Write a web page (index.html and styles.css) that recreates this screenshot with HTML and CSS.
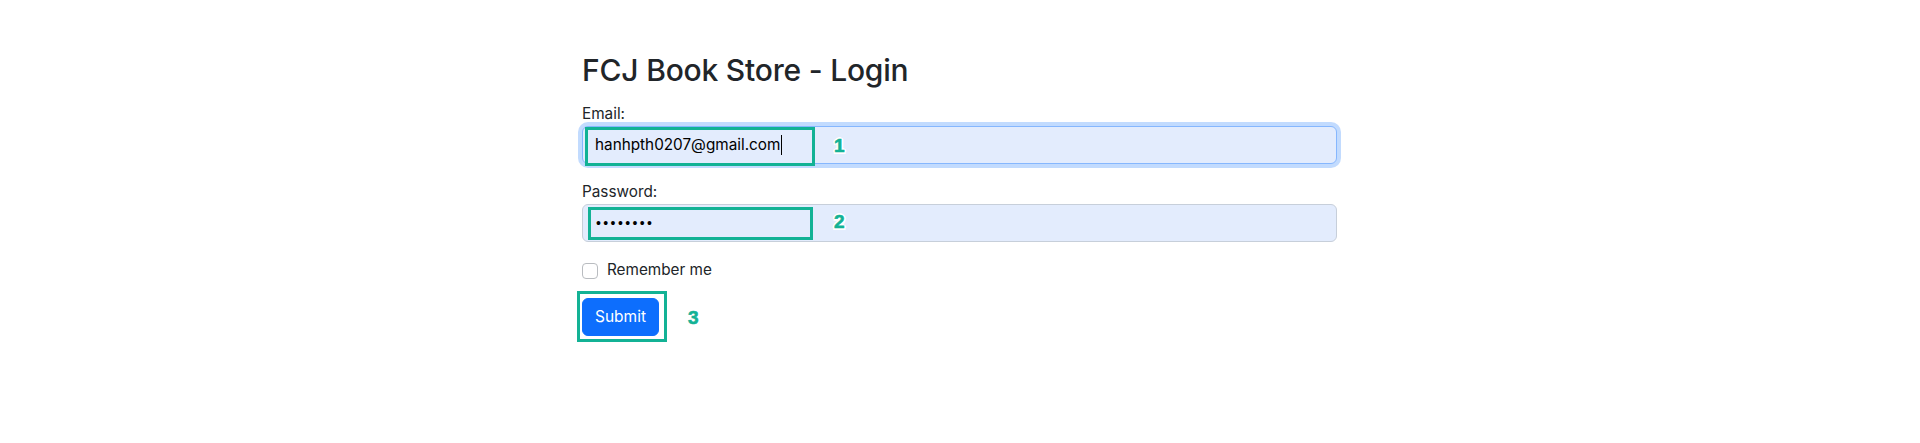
FILE: index.html
```html
<!DOCTYPE html>
<html lang="en">
<head>
<meta charset="utf-8">
<title>FCJ Book Store - Login</title>
<link rel="stylesheet" href="styles.css">
</head>
<body>
<main class="page">
  <h2 class="title">FCJ Book Store - Login</h2>
  <form class="form">
    <div class="group">
      <label class="label">Email:</label>
      <div class="field field-focus">
        <span class="value">hanhpth0207@gmail.com</span><span class="caret"></span>
        <span class="mark mark-1"></span>
        <span class="num num-1">1</span>
      </div>
    </div>
    <div class="group">
      <label class="label">Password:</label>
      <div class="field">
        <span class="value dots">••••••••</span>
        <span class="mark mark-2"></span>
        <span class="num num-2">2</span>
      </div>
    </div>
    <div class="group check">
      <span class="checkbox"></span>
      <span class="check-label">Remember me</span>
    </div>
    <div class="btn-wrap">
      <button type="button" class="btn">Submit</button>
      <span class="mark mark-3"></span>
      <span class="num num-3">3</span>
    </div>
  </form>
</main>
</body>
</html>
```
FILE: styles.css
```css
* { box-sizing: border-box; }
html, body { margin: 0; padding: 0; background: #fff; }
body {
  font-family: Inter, "Liberation Sans", Arial, sans-serif;
  font-size: 15.3px;
  line-height: 1.5;
  color: #212529;
  min-height: 443px;
}
.page {
  width: 755px;
  margin-left: 582px;
  padding-top: 51px;
  padding-bottom: 80px;
}
.title {
  margin: 0 0 13px;
  font-size: 30px;
  font-weight: 500;
  line-height: 38px;
  letter-spacing: -0.2px;
}
.form { display: flex; flex-direction: column; }
.group { margin-bottom: 16px; }
.label { display: block; line-height: 24px; }
.field {
  position: relative;
  display: flex;
  align-items: center;
  height: 38px;
  padding: 6px 12px;
  border: 1px solid #c7cfda;
  border-radius: 6px;
  background: #e3ecfd;
  color: #000;
}
.field-focus {
  border-color: #86b7fe;
  box-shadow: 0 0 0 4px #c2dbfe;
}
.value { white-space: nowrap; }
.dots {
  font-family: "Liberation Sans", Arial, sans-serif;
  font-size: 14px;
  letter-spacing: 2.4px;
  padding-left: 1px;
}
.caret {
  display: inline-block;
  width: 1px;
  height: 20px;
  background: #000;
  margin-left: 1px;
}
.mark {
  position: absolute;
  border: 3px solid #13b295;
  pointer-events: none;
}
.mark-1 { left: 2px; top: 0; width: 230px; height: 39px; }
.mark-2 { left: 5px; top: 2px; width: 225px; height: 33px; }
.mark-3 { left: -5px; top: -7px; width: 90px; height: 51px; }
.num {
  position: absolute;
  font-family: "Liberation Sans", Arial, sans-serif;
  font-weight: 700;
  font-size: 19px;
  line-height: 1;
  color: #13b295;
  -webkit-text-stroke: 0.6px #13b295;
  text-shadow:
    2px 0 0 #fff, -2px 0 0 #fff, 0 2px 0 #fff, 0 -2px 0 #fff,
    1.5px 1.5px 0 #fff, -1.5px -1.5px 0 #fff, 1.5px -1.5px 0 #fff, -1.5px 1.5px 0 #fff;
}
.num-1 { left: 251px; top: 9px; }
.num-2 { left: 251px; top: 7px; }
.num-3 { left: 106px; top: 10px; }
.check {
  display: flex;
  align-items: center;
  gap: 9px;
  min-height: 24px;
}
.checkbox {
  width: 16px;
  height: 16px;
  border: 1px solid #b9bcc0;
  border-radius: 4px;
  background: #fff;
  margin-top: 1px;
}
.btn-wrap { position: relative; align-self: flex-start; }
.btn {
  display: block;
  height: 38px;
  padding: 6px 12px;
  border: 1px solid #0d6efd;
  border-radius: 6px;
  background: #0d6efd;
  color: #fff;
  font-family: inherit;
  font-size: 15.5px;
  line-height: 24px;
}
```
